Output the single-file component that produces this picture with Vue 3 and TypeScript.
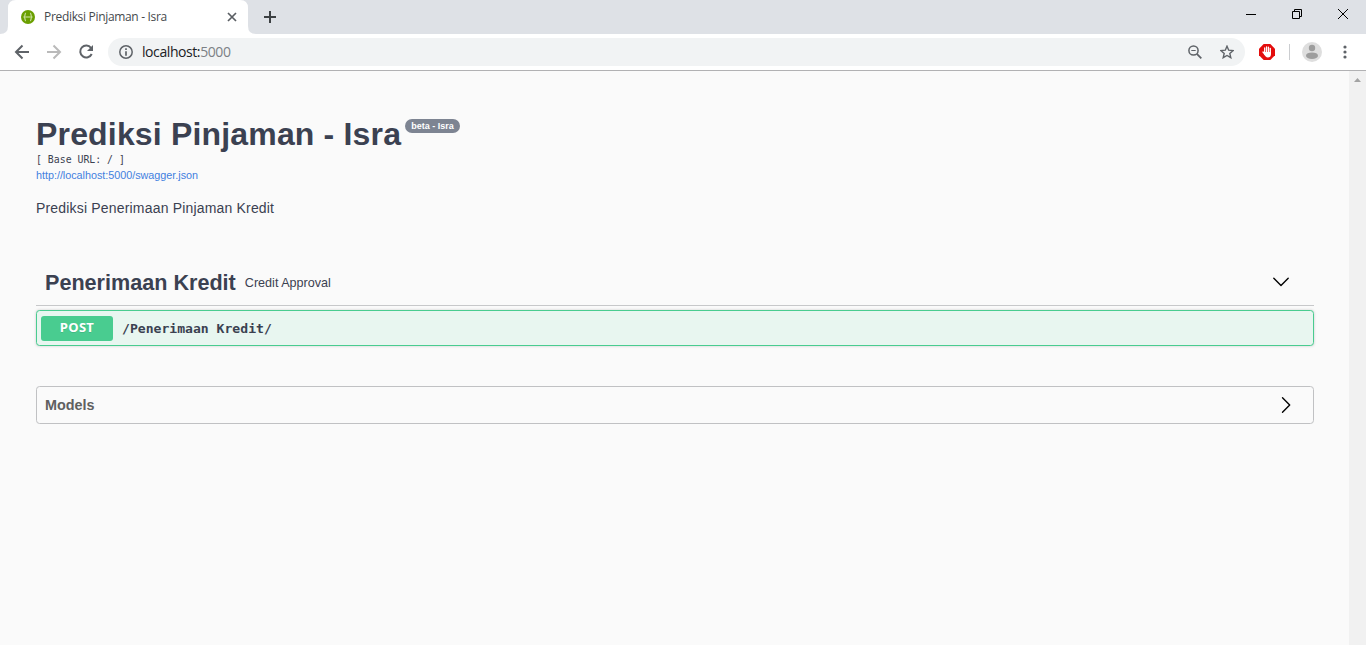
<script setup lang="ts">
const title = 'Prediksi Pinjaman - Isra'
const endpoint = { method: 'POST', path: '/Penerimaan Kredit/' }
</script>

<template>
  <div class="window">
    <header class="tabs">
      <svg class="tab-shape" width="264" height="34" viewBox="0 0 264 34"><path d="M0 34Q8 34 8 26V8Q8 0 16 0H240Q248 0 248 8V26Q248 34 256 34Z" fill="#fff" /></svg>
      <div class="tab">
        <svg class="favicon" width="14" height="14" viewBox="0 0 14 14">
          <circle cx="7" cy="7" r="7" fill="#6a9f00" />
          <path d="M5 3Q3.900 3 4 5Q4 7 2.700 7Q4 7 4 9Q3.900 11 5 11M9 3Q10.100 3 10 5Q10 7 11.300 7Q10 7 10 9Q10.100 11 9 11" fill="none" stroke="#dcebbd" />
          <path d="M3.500 7h7" stroke="#c3dc8e" stroke-width="1.200" />
        </svg>
        <span class="tab-title">{{ title }}</span>
        <svg class="tab-close" width="10" height="10" viewBox="0 0 10 10"><path d="M1 1l8 8M9 1l-8 8" stroke="#5a5e63" stroke-width="1.700" /></svg>
      </div>
      <svg class="new-tab" width="12" height="12" viewBox="0 0 12 12"><path d="M6 0v12M0 6h12" stroke="#3c4043" stroke-width="2" /></svg>
      <svg class="controls" width="104" height="14" viewBox="0 0 104 14" fill="none" stroke="#000">
        <path d="M0 7.5h10" />
        <path d="M46.500 4.500h7v7h-7zM48.500 4.500v-2h7v7h-2" />
        <path d="M92 2l10 10M102 2L92 12" />
      </svg>
    </header>

    <nav class="toolbar">
      <svg class="nav-icons" width="96" height="20" viewBox="0 0 96 20" fill="none" stroke="#5f6368" stroke-width="2">
        <path d="M29 10H16.500M22.500 3.500L16 10l6.500 6.500" />
        <path d="M47 10h12.500M53.500 3.500L60 10l-6.500 6.500" stroke="#bababa" />
        <path d="M91 5.800A6 6 0 1 0 91.700 12" />
        <path d="M93 3v6h-6z" fill="#5f6368" stroke="none" />
      </svg>
      <div class="address">
        <svg width="14" height="14" viewBox="0 0 14 14"><circle cx="7" cy="7" r="6.200" fill="none" stroke="#5f6368" stroke-width="1.5" /><path d="M7 3.200v1.700M7 6.200v4.500" stroke="#5f6368" stroke-width="1.700" /></svg>
        <span class="url">localhost:<span class="port">5000</span></span>
        <svg class="zoom-out" width="14" height="14" viewBox="0 0 14 14" fill="none" stroke="#5f6368"><circle cx="5.500" cy="5.500" r="4.600" stroke-width="1.500" /><path d="M3.300 5.500h4.400" /><path d="M8.800 8.800l4.500 4.500" stroke-width="1.800" /></svg>
        <svg width="14" height="14" viewBox="0 0 14 14"><path d="M7 1.200l1.700 4 4.400.4-3.300 2.800 1 4.300L7 10.500l-3.800 2.200 1-4.300L.9 5.600l4.400-.4z" fill="none" stroke="#5f6368" stroke-width="1.400" /></svg>
      </div>
      <svg class="blocker" width="16" height="16" viewBox="0 0 16 16">
        <path d="M4.700 0h6.600L16 4.700v6.600L11.300 16H4.700L0 11.300V4.700z" fill="#e40d0d" />
        <path d="M5.700 4v5M7.600 2.900V9M9.500 3.200V9M11.300 4.500V10M4 8l1.700 2.200" fill="none" stroke="#fff" stroke-width="1.300" stroke-linecap="round" />
        <path d="M5 8h6.900v2.400Q11.900 13.400 8.800 13.400 6.500 13.400 5 10z" fill="#fff" />
      </svg>
      <span class="divider"></span>
      <svg class="avatar" width="20" height="20" viewBox="0 0 20 20"><circle cx="10" cy="10" r="10" fill="#dedede" /><circle cx="10" cy="6" r="3.200" fill="#9d9d9d" /><ellipse cx="10" cy="13.700" rx="6" ry="3.300" fill="#9d9d9d" /></svg>
      <svg class="menu" width="4" height="14" viewBox="0 0 4 14" fill="#5f6368"><circle cx="2" cy="2" r="1.600" /><circle cx="2" cy="7" r="1.600" /><circle cx="2" cy="12" r="1.600" /></svg>
    </nav>

    <div class="viewport">
      <main class="page">
        <div class="heading"><h1>{{ title }}</h1><span class="version">beta - Isra</span></div>
        <pre class="base">[ Base URL: / ]</pre>
        <a class="spec">http://localhost:5000/swagger.json</a>
        <p class="description">Prediksi Penerimaan Pinjaman Kredit</p>
        <section>
          <div class="tag">
            <h2>Penerimaan Kredit</h2>
            <small>Credit Approval</small>
            <svg width="18" height="10" viewBox="0 0 18 10"><path d="M1.800 1.300L9 8.500 16.200 1.300" fill="none" stroke="#000" stroke-width="1.400" stroke-linecap="round" stroke-linejoin="round" /></svg>
          </div>
          <div class="operation">
            <span class="method">{{ endpoint.method }}</span>
            <span class="path">{{ endpoint.path }}</span>
          </div>
        </section>
        <section class="models">
          <h4>Models</h4>
          <svg width="10" height="18" viewBox="0 0 10 18"><path d="M1.500 1.800L8.700 9 1.500 16.200" fill="none" stroke="#000" stroke-width="1.400" stroke-linecap="round" stroke-linejoin="round" /></svg>
        </section>
      </main>
      <aside class="scrollbar"><svg width="7" height="4" viewBox="0 0 7 4"><path d="M0 4L3.500 0 7 4z" fill="#a3a3a3" /></svg></aside>
    </div>
  </div>
</template>

<style>
body { margin: 0; overflow: hidden; }
</style>

<style scoped>
* { box-sizing: border-box; }
svg { display: block; flex: none; }
h1, h2, h4, p, pre { margin: 0; }
.window { width: 1366px; height: 645px; display: flex; flex-direction: column; font-family: "Liberation Sans", Arial, sans-serif; color: #3b4151; white-space: nowrap; overflow: hidden; }
.tabs { height: 34px; flex: none; background: #dee1e6; display: flex; position: relative; }
.tab-shape { position: absolute; left: 0; top: 0; }
.tab { position: relative; width: 248px; height: 34px; display: flex; align-items: center; padding: 0 11px 0 21px; }
.tab-title { margin-left: 9px; font: 12px/16px "Open Sans", "Noto Sans", sans-serif; letter-spacing: -.32px; color: #45494d; }
.tab-close { margin-left: auto; }
.new-tab { margin: 11px 0 0 16px; }
.controls { margin: 7px 16px 0 auto; }
.toolbar { height: 37px; flex: none; background: #fff; border-bottom: 1px solid #b1b1b3; display: flex; align-items: center; }
.nav-icons { width: 96px; margin-right: 12px; }
.address { width: 1137px; height: 28px; border-radius: 14px; background: #f1f3f4; display: flex; align-items: center; padding: 0 11px; }
.url { margin-left: 9px; font: 14px/20px "Open Sans", "Noto Sans", sans-serif; letter-spacing: -.42px; color: #202124; }
.port { color: #7c8085; }
.zoom-out { margin: 0 18px 0 auto; }
.blocker { margin-left: 14px; }
.divider { width: 1px; height: 16px; margin-left: 14px; background: #cbcdd0; }
.avatar { margin-left: 12px; }
.menu { margin-left: 20.500px; }
.viewport { flex: 1; display: flex; background: #fafafa; }
.page { width: 1349px; padding: 45px 35px 0 36px; }
.heading { display: flex; height: 37px; }
h1 { width: 365px; font-size: 32px; line-height: 37px; letter-spacing: .17px; }
.version { width: 55px; height: 14px; margin: 3px 0 0 4px; border-radius: 7px; background: #7d8492; color: #fff; font-size: 9px; font-weight: bold; line-height: 14px; text-align: center; }
.base { height: 13px; font: 9.85px/13px "DejaVu Sans Mono", monospace; }
.spec { display: block; margin-top: 3px; font-size: 10.8px; line-height: 13px; letter-spacing: -.02px; color: #4280df; }
.description { margin-top: 17px; font-size: 14px; line-height: 18px; letter-spacing: .18px; }
.tag { height: 47px; margin-top: 42px; display: flex; align-items: center; border-bottom: 1px solid #c7c8ca; padding: 0 24px 0 9px; }
h2 { font-size: 21.6px; line-height: 26px; padding-top: 1px; }
small { margin-left: 9px; padding-top: 2px; font-size: 12.6px; }
.tag svg { margin-left: auto; }
.operation { height: 36px; margin-top: 4px; border: 1px solid #49cc90; border-radius: 3.6px; background: #e8f6f0; box-shadow: 0 0 3px rgba(0,0,0,.19); display: flex; align-items: center; padding: 0 4px; }
.method { width: 72px; height: 25px; border-radius: 3px; background: #49cc90; color: #fff; font: bold 13px/23px "Open Sans", sans-serif; letter-spacing: .3px; text-align: center; text-shadow: 0 1px 0 rgba(0,0,0,.1); }
.path { margin-left: 9px; padding-top: 1px; font: bold 13.1px/20px "DejaVu Sans Mono", monospace; }
.models { height: 38px; margin-top: 40px; padding: 0 22px 0 8px; border: 1px solid #c0c1c3; border-radius: 3.6px; display: flex; align-items: center; justify-content: space-between; }
h4 { font-size: 14.4px; line-height: 18px; color: #606060; }
.scrollbar { width: 17px; background: #f1f1f1; padding: 7px 0 0 5px; }
</style>
